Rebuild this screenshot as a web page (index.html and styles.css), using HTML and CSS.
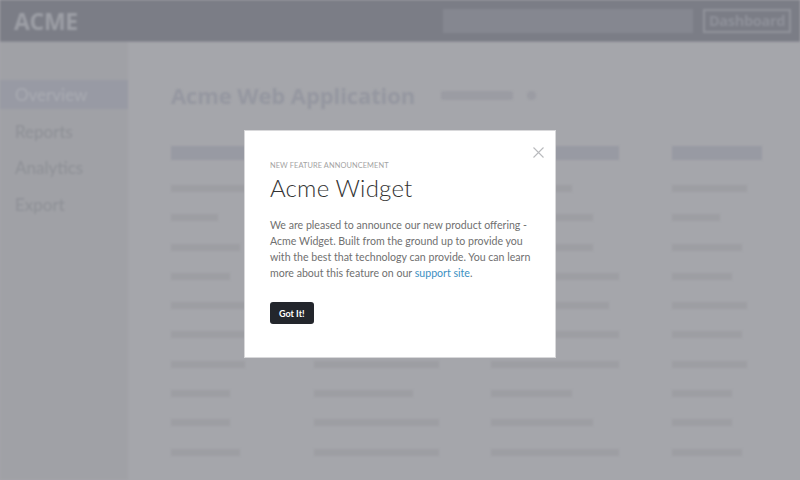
FILE: index.html
```html
<!DOCTYPE html>
<html>
<head>
<title>Acme Web Application</title>
<link rel="stylesheet" href="styles.css">
</head>
<body>

<div class="app">
  <div class="topbar">
    <div class="logo">ACME</div>
    <div class="search"></div>
    <div class="dash-btn">Dashboard</div>
  </div>
  <div class="main">
    <div class="sidebar">
      <div class="nav-item active">Overview</div>
      <div class="nav-item">Reports</div>
      <div class="nav-item">Analytics</div>
      <div class="nav-item">Export</div>
    </div>
    <div class="content">
      <div class="page-title">
        <h1>Acme Web Application</h1>
        <span class="pill"></span>
        <span class="dot"></span>
      </div>
      <div class="table">
        <div class="col">
          <div class="th" style="width: 130px"></div>
          <div class="td" style="width: 80px"></div>
          <div class="td" style="width: 47px"></div>
          <div class="td" style="width: 69px"></div>
          <div class="td" style="width: 59px"></div>
          <div class="td" style="width: 80px"></div>
          <div class="td" style="width: 80px"></div>
          <div class="td" style="width: 74px"></div>
          <div class="td" style="width: 59px"></div>
          <div class="td" style="width: 59px"></div>
          <div class="td" style="width: 69px"></div>
        </div>
        <div class="col">
          <div class="th" style="width: 125px"></div>
          <div class="td" style="width: 125px"></div>
          <div class="td" style="width: 100px"></div>
          <div class="td" style="width: 115px"></div>
          <div class="td" style="width: 125px"></div>
          <div class="td" style="width: 110px"></div>
          <div class="td" style="width: 125px"></div>
          <div class="td" style="width: 125px"></div>
          <div class="td" style="width: 99px"></div>
          <div class="td" style="width: 125px"></div>
          <div class="td" style="width: 125px"></div>
        </div>
        <div class="col">
          <div class="th" style="width: 128px"></div>
          <div class="td" style="width: 81px"></div>
          <div class="td" style="width: 102px"></div>
          <div class="td" style="width: 102px"></div>
          <div class="td" style="width: 128px"></div>
          <div class="td" style="width: 118px"></div>
          <div class="td" style="width: 128px"></div>
          <div class="td" style="width: 128px"></div>
          <div class="td" style="width: 81px"></div>
          <div class="td" style="width: 102px"></div>
          <div class="td" style="width: 128px"></div>
        </div>
        <div class="col">
          <div class="th" style="width: 90px"></div>
          <div class="td" style="width: 75px"></div>
          <div class="td" style="width: 48px"></div>
          <div class="td" style="width: 70px"></div>
          <div class="td" style="width: 60px"></div>
          <div class="td" style="width: 75px"></div>
          <div class="td" style="width: 70px"></div>
          <div class="td" style="width: 75px"></div>
          <div class="td" style="width: 60px"></div>
          <div class="td" style="width: 60px"></div>
          <div class="td" style="width: 70px"></div>
        </div>
      </div>
    </div>
  </div>
</div>

<div class="overlay">
  <div class="modal">
    <span class="close">
      <svg width="11" height="11" viewBox="0 0 11 11"><path d="M0.5 0.5L10.5 10.5M10.5 0.5L0.5 10.5" stroke="#b9babd" stroke-width="1.1" fill="none"/></svg>
    </span>
    <p class="kicker">New Feature Announcement</p>
    <h2>Acme Widget</h2>
    <p class="body-text">We are pleased to announce our new product offering - Acme Widget. Built from the ground up to provide you with the best that technology can provide. You can learn more about this feature on our <a href="#">support site</a>.</p>
    <button class="got-it">Got It!</button>
  </div>
</div>

</body>
</html>
```

FILE: styles.css
```css
body {
  margin: 0;
  width: 800px;
  height: 480px;
  overflow: hidden;
  font-family: Lato, 'Open Sans', sans-serif;
  background: #a5a6ab;
}

.app {
  filter: blur(0.9px);
  height: 480px;
}

.topbar {
  height: 41px;
  background: #7b7d86;
  border-bottom: 1px solid #8a8b94;
  display: flex;
  align-items: center;
  padding: 0 9px 0 14px;
}

.logo {
  color: #9c9ea5;
  font-family: 'Open Sans', sans-serif;
  font-weight: 700;
  font-size: 23px;
  letter-spacing: -0.3px;
  flex: 1;
}

.search {
  width: 250px;
  height: 24px;
  background: #858790;
  margin-right: 10px;
}

.dash-btn {
  width: 84px;
  height: 20px;
  border: 2px solid #91939b;
  color: #8e9099;
  font-family: 'Open Sans', sans-serif;
  font-weight: 700;
  font-size: 14.5px;
  letter-spacing: -0.3px;
  display: flex;
  align-items: center;
  justify-content: center;
}

.main {
  display: flex;
  height: 438px;
}

.sidebar {
  width: 128px;
  background: #a0a1a6;
  padding-top: 38px;
}

.nav-item {
  height: 29px;
  line-height: 29px;
  padding-left: 15px;
  margin-bottom: 7.5px;
  font-size: 17px;
  color: #8e9096;
}

.nav-item.active {
  background: #989aa4;
  color: #a9abb2;
}

.content {
  flex: 1;
  padding: 38px 0 0 43px;
}

.page-title {
  display: flex;
  align-items: center;
  height: 30px;
}

.page-title h1 {
  margin: 0;
  font-size: 22px;
  font-weight: 700;
  color: #9597a0;
  font-family: 'Open Sans', sans-serif;
  letter-spacing: -0.1px;
}

.pill {
  width: 72px;
  height: 9px;
  background: #9b9ca3;
  border-radius: 3px;
  margin-left: 26px;
}

.dot {
  width: 9px;
  height: 9px;
  background: #9b9ca3;
  border-radius: 50%;
  margin-left: 14px;
}

.table {
  display: grid;
  grid-template-columns: 143px 177px 181px 1fr;
  margin-top: 36px;
}

.th {
  height: 14px;
  background: #989aa3;
  margin-bottom: 25px;
}

.td {
  height: 7px;
  background: #9d9ea3;
  margin-bottom: 22.3px;
}

.overlay {
  position: fixed;
  inset: 0;
  display: flex;
  align-items: center;
  justify-content: center;
  padding-top: 8px;
}

.modal {
  position: relative;
  box-sizing: border-box;
  width: 312px;
  height: 228px;
  background: #fff;
  border: 1px solid #d8d8da;
  padding: 30px 20px 0 25px;
}

.close {
  position: absolute;
  top: 11px;
  right: 11px;
}

.kicker {
  margin: 0;
  font-size: 7.4px;
  text-transform: uppercase;
  color: #a3a3a3;
  letter-spacing: 0.1px;
}

.modal h2 {
  margin: 3px 0 0;
  font-size: 24px;
  font-weight: 300;
  color: #333;
  letter-spacing: 0.2px;
}

.body-text {
  margin: 15px 0 0;
  font-size: 10.6px;
  line-height: 16px;
  color: #707070;
}

.body-text a {
  color: #3b8fc2;
  text-decoration: none;
}

.got-it {
  margin-top: 21px;
  background: #23262c;
  color: #fff;
  border: none;
  border-radius: 3px;
  font-family: Lato, sans-serif;
  font-weight: 700;
  font-size: 9px;
  padding: 0 9px;
  height: 22px;
}
```
